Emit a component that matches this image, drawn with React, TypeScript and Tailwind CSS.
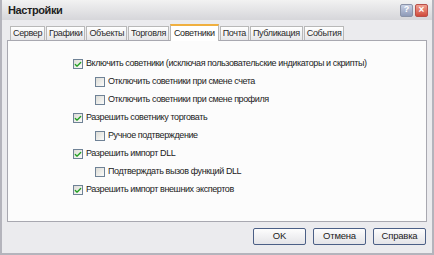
import { Check } from "lucide-react";

const tabs = [
  "Сервер",
  "Графики",
  "Объекты",
  "Торговля",
  "Советники",
  "Почта",
  "Публикация",
  "События",
];

const options = [
  { label: "Включить советники (исключая пользовательские индикаторы и скрипты)", checked: true, level: 0 },
  { label: "Отключить советники при смене счета", checked: false, level: 1 },
  { label: "Отключить советники при смене профиля", checked: false, level: 1 },
  { label: "Разрешить советнику торговать", checked: true, level: 0 },
  { label: "Ручное подтверждение", checked: false, level: 1 },
  { label: "Разрешить импорт DLL", checked: true, level: 0 },
  { label: "Подтверждать вызов функций DLL", checked: false, level: 1 },
  { label: "Разрешить импорт внешних экспертов", checked: true, level: 0 },
];

function CheckBox({ checked }: { checked: boolean }) {
  return (
    <span className="flex h-[10px] w-[10px] shrink-0 items-center justify-center border border-[#6f8296] bg-gradient-to-br from-[#dcdcd6] to-[#fbfbfa]">
      {checked && <Check className="h-[9px] w-[9px] text-[#22a022]" strokeWidth={4} />}
    </span>
  );
}

function Button({ label }: { label: string }) {
  return (
    <button className="flex h-[17px] w-[53px] items-center justify-center rounded-[2px] border border-[#4b5f86] bg-gradient-to-b from-[#fdfdfd] to-[#e4e4e8] text-[9.5px] tracking-[-0.2px] text-[#222]">
      {label}
    </button>
  );
}

export default function App() {
  return (
    <div
      className="flex h-[255px] w-[434px] flex-col overflow-hidden bg-[#e9e9ec]"
      style={{ fontFamily: '"Liberation Sans", Arial, sans-serif' }}
    >
      <div className="flex h-[255px] flex-col border-x-[2px] border-b-[2px] border-[#b4b4bc] bg-[#ebebee]">
        {/* title bar */}
        <div className="flex h-[20px] shrink-0 items-center justify-between bg-gradient-to-b from-[#f2f2f2] to-[#d6d6da] pl-[6px] pr-[4px]">
          <span className="text-[11px] font-bold tracking-[-0.4px] text-[#1e1e1e]">Настройки</span>
          <div className="flex gap-[2px]">
            <span className="flex h-[13px] w-[13px] items-center justify-center rounded-[2px] border border-[#8a93a8] bg-gradient-to-b from-[#c8d0e4] to-[#8e9ab8] text-[9px] font-bold text-white">
              ?
            </span>
            <span className="flex h-[13px] w-[13px] items-center justify-center rounded-[2px] border border-[#b8504a] bg-gradient-to-b from-[#f0a090] to-[#d04a3c] text-[10px] font-bold leading-none text-white">
              ×
            </span>
          </div>
        </div>

        <div className="flex flex-1 flex-col px-[5px] pt-[4px]">
          {/* tabs */}
          <div className="flex h-[16px] items-end gap-[1px] pl-[3px]">
            {tabs.map((tab) => {
              const active = tab === "Советники";
              return active ? (
                <div
                  key={tab}
                  className="relative z-10 -mb-px flex h-[17px] items-center border-x border-t-[2px] border-x-[#b8b8b8] border-t-[#f0b040] bg-white px-[3px] text-[9px] tracking-[-0.35px] text-[#1e1e1e]"
                >
                  {tab}
                </div>
              ) : (
                <div
                  key={tab}
                  className="flex h-[14px] items-center border border-b-0 border-[#b8b8b8] bg-gradient-to-b from-[#ffffff] to-[#e6e6e8] px-[2px] text-[9px] tracking-[-0.35px] text-[#2a2a2a]"
                >
                  {tab}
                </div>
              );
            })}
          </div>

          {/* panel */}
          <div className="flex h-[182px] flex-col gap-[8px] border border-[#a8a8b0] bg-[#fcfcfc] pl-[65px] pt-[18px]">
            {options.map((o) => (
              <div
                key={o.label}
                className={`flex h-[10px] items-center gap-[3px] ${o.level ? "pl-[22px]" : ""}`}
              >
                <CheckBox checked={o.checked} />
                <span className="whitespace-nowrap text-[9px] tracking-[-0.4px] text-[#222]">{o.label}</span>
              </div>
            ))}
          </div>

          {/* buttons */}
          <div className="mt-[6px] flex justify-end gap-[7px] pr-[1px]">
            <Button label="OK" />
            <Button label="Отмена" />
            <Button label="Справка" />
          </div>
        </div>
      </div>
    </div>
  );
}
